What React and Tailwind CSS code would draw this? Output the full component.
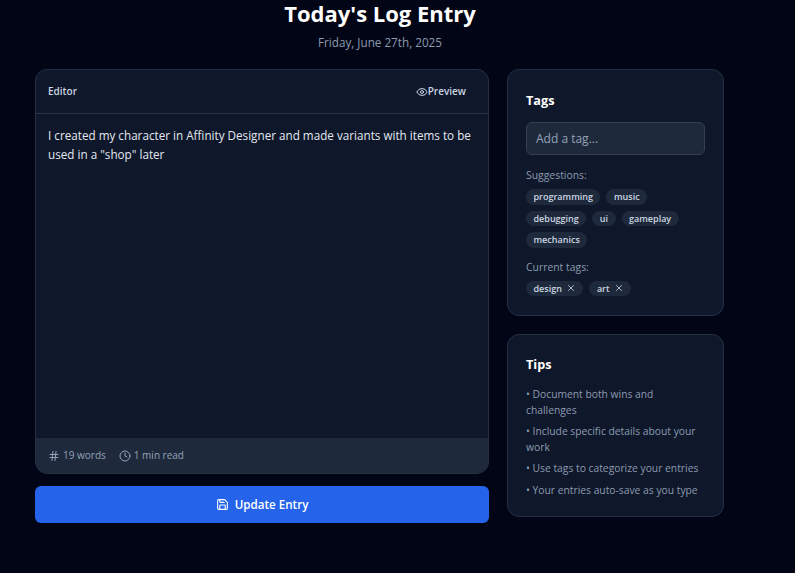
import React from 'react'
import { Eye, Hash, Clock, Save, X } from 'lucide-react'

const suggestions = ['programming', 'music', 'debugging', 'ui', 'gameplay', 'mechanics']
const currentTags = ['design', 'art']
const tips = [
  'Document both wins and challenges',
  'Include specific details about your work',
  'Use tags to categorize your entries',
  'Your entries auto-save as you type',
]

const App = () => {
  return (
    <div className="h-[573px] w-full overflow-hidden bg-[#020515] font-['Open_Sans',sans-serif]">
      <div className="w-[760px] px-[35px]">
        {/* Header */}
        <div className="mb-[18px] text-center">
          <h1 className="text-[22px] leading-[26px] font-bold text-white">Today's Log Entry</h1>
          <p className="mt-[7px] text-[11.7px] leading-[18px] text-[#8d9bb0]">Friday, June 27th, 2025</p>
        </div>

        <div className="flex gap-[18px]">
          {/* Main column */}
          <div className="w-[454px] shrink-0">
            <div className="flex h-[405px] flex-col overflow-hidden rounded-xl border border-[#253045] bg-[#0f172a]">
              <div className="flex h-[44px] items-center justify-between border-b border-[#2a3548] pr-[22px] pl-[12px]">
                <span className="text-[10px] font-semibold text-[#cbd5e1]">Editor</span>
                <button className="flex items-center text-[10px] font-semibold text-[#cbd5e1]">
                  <Eye className="h-3 w-3" />
                  Preview
                </button>
              </div>
              <div className="flex-1 p-[12px] text-[11.7px] leading-[18.5px] text-[#e2e8f0]">
                I created my character in Affinity Designer and made variants with items to be used in a "shop" later
              </div>
              <div className="flex h-[35px] items-center gap-[13px] bg-[#1e293b] px-[12px] text-[10px] text-[#94a3b8]">
                <span className="flex items-center gap-[3px]">
                  <Hash className="h-3 w-3" />
                  19 words
                </span>
                <span className="flex items-center gap-[3px]">
                  <Clock className="h-3 w-3" />
                  1 min read
                </span>
              </div>
            </div>
            <button className="mt-[12px] flex h-[37px] w-full items-center justify-center gap-[6px] rounded-md bg-[#2563eb] text-[11.6px] font-semibold text-white">
              <Save className="h-[13px] w-[13px]" />
              Update Entry
            </button>
          </div>

          {/* Sidebar */}
          <div className="flex w-[217px] shrink-0 flex-col gap-[18px]">
            <div className="h-[247px] rounded-xl border border-[#253045] bg-[#0f172a] px-[18px] pt-[19px]">
              <h2 className="text-[12.7px] leading-[22px] font-bold text-white">Tags</h2>
              <input
                placeholder="Add a tag..."
                className="mt-[11px] h-[33px] w-full rounded-md border border-[#334155] bg-[#1e293b] px-[9px] text-[12px] text-white outline-none placeholder:text-[#94a3b8]"
              />
              <p className="mt-[12px] text-[10.4px] leading-[16px] text-[#8d9bb0]">Suggestions:</p>
              <div className="mt-[6px] flex flex-wrap gap-[6px]">
                {suggestions.map((tag) => (
                  <span key={tag} className="flex h-[15.5px] items-center rounded-full bg-[#1e293b] px-[7.5px] text-[9px] font-semibold text-[#cbd5e1]">
                    {tag}
                  </span>
                ))}
              </div>
              <p className="mt-[11px] text-[10.4px] leading-[16px] text-[#8d9bb0]">Current tags:</p>
              <div className="mt-[6px] flex flex-wrap gap-[6px]">
                {currentTags.map((tag) => (
                  <span key={tag} className="flex h-[15.5px] items-center gap-[4px] rounded-full bg-[#1e293b] px-[7.5px] text-[9px] font-semibold text-[#cbd5e1]">
                    {tag}
                    <X className="h-[10px] w-[10px]" />
                  </span>
                ))}
              </div>
            </div>

            <div className="h-[183px] rounded-xl border border-[#253045] bg-[#0f172a] px-[18px] pt-[18px]">
              <h2 className="text-[12.7px] leading-[22px] font-bold text-white">Tips</h2>
              <ul className="mt-[12px] flex flex-col gap-[6px] text-[10.3px] leading-[15.5px] text-[#8d9bb0]">
                {tips.map((tip) => (
                  <li key={tip}>• {tip}</li>
                ))}
              </ul>
            </div>
          </div>
        </div>
      </div>
    </div>
  )
}

export default App
